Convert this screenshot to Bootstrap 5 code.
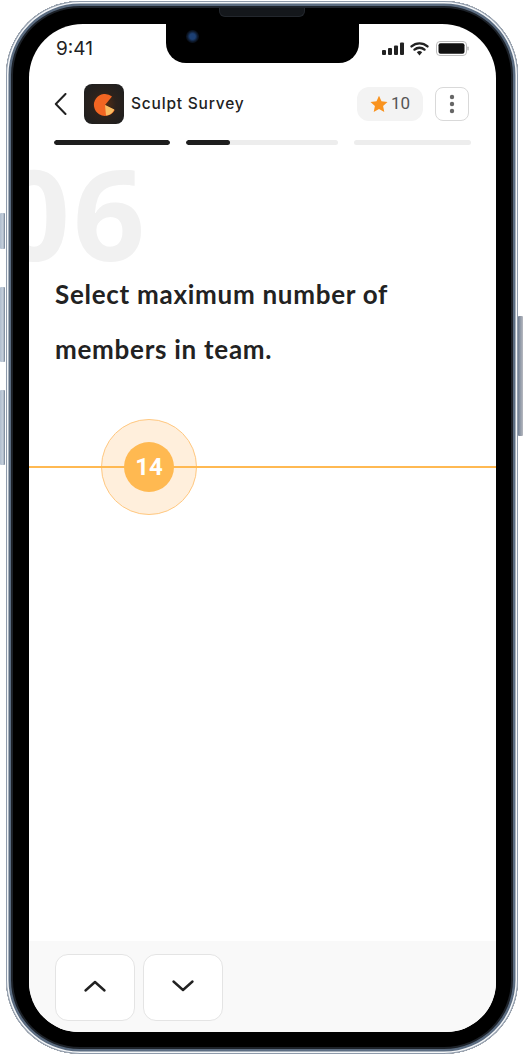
<!DOCTYPE html>
<html lang="en">
<head>
  <meta charset="UTF-8" />
  <meta name="viewport" content="width=device-width, initial-scale=1.0"/>
  <title>Sculpt Survey</title>
  <link href="https://cdn.jsdelivr.net/npm/bootstrap@5.3.3/dist/css/bootstrap.min.css" rel="stylesheet">
  <style>
    html, body { background: #fff; }
    body { margin: 0; width: 524px; height: 1056px; overflow: hidden; font-family: "Lato", sans-serif; }

    /* phone frame */
    .phone-wrap { position: relative; width: 524px; height: 1056px; padding: 1px 6px 2px 6px; }
    .phone-shell {
      position: relative; width: 100%; height: 100%; padding: 23px 22px 22px 23px;
      background: #000; border-radius: 74px;
      box-shadow: inset 0 0 0 1px #8f9bab, inset 0 0 0 2.5px #f4f6f8, inset 0 0 0 5px #5b6c81, inset 0 0 0 7px #1d2229;
    }
    .side-btn { position: absolute; background: linear-gradient(90deg, #aebccd, #c6d0dc 60%, #6d7c90); border-radius: 1px; }
    .side-a { left: 0; top: 213px; width: 5px; height: 36px; }
    .side-b { left: 0; top: 287px; width: 5px; height: 75px; }
    .side-c { left: 0; top: 390px; width: 5px; height: 75px; }
    .side-d { right: 1px; top: 316px; width: 5px; height: 120px; background: linear-gradient(90deg, #6d7c90, #b7b9c0); }
    .speaker { position: absolute; left: 213px; top: 7px; width: 86px; height: 9px; background: #14171b; border-radius: 0 0 6px 6px; border: 1px solid #23272d; border-top: 0; }

    .phone-screen { position: relative; height: 100%; background: #fff; border-radius: 54px 54px 50px 50px; overflow: hidden; }
    .notch { position: absolute; left: 137px; top: 0; width: 193px; height: 39px; background: #000; border-radius: 0 0 20px 20px; z-index: 3; }
    .camera { position: absolute; left: 20px; top: 6px; width: 13px; height: 13px; border-radius: 50%; background: radial-gradient(circle, #1c3f73 0 30%, #0b1422 60%, #05070b 100%); }

    .status-row { height: 48px; padding: 13px 27px 0 27px; }
    .status-time { font-family: "Inter", sans-serif; font-size: 19px; font-weight: 400; line-height: 24px; color: #222; }
    .status-icons { margin-top: 3px; }

    /* header */
    .top-row { height: 40px; margin-top: 12px; padding: 0 27px 0 25px; }
    .back-btn { width: 30px; }
    .app-logo { width: 40px; height: 40px; }
    .app-name { font-family: "Inter", sans-serif; font-size: 15.5px; font-weight: 500; color: #222; margin-left: 7px; letter-spacing: .8px; }
    .points-pill { width: 66px; height: 34px; border-radius: 12px; background: #f3f3f3; color: #555; font-family: "Roboto", sans-serif; font-size: 17px; gap: 3px; }
    .menu-btn { width: 34px; height: 34px; margin-left: 12px; border: 1px solid #d9d9d9; border-radius: 8px; background: #fff; }

    .progress-row { gap: 16px; margin-top: 16px; padding: 0 25px; }
    .step-track { height: 5px; border-radius: 3px; background: #ededed; overflow: hidden; }
    .step-fill { height: 100%; background: #1e1e1e; border-radius: 3px; }

    /* question */
    .question-no { height: 110px; margin: 12px 0 0 -31px; font-family: "Open Sans", sans-serif; font-weight: 700; font-size: 126px; line-height: 110px; color: #f1f1f1; letter-spacing: 3px; }
    .question-text { margin: 0 0 0 26px; font-family: "Lato", sans-serif; font-weight: 700; font-size: 26px; line-height: 55px; color: #222; letter-spacing: .72px; }

    /* slider */
    .slider-area { position: relative; height: 96px; margin-top: 42px; }
    .slider-line { position: absolute; left: 0; right: 0; top: 47px; height: 2px; background: #ffb952; }
    .slider-halo { position: absolute; left: 72px; top: 0; width: 96px; height: 96px; border-radius: 50%; background: #ffefdc; border: 1.5px solid #ffc880; }
    .slider-thumb { position: relative; z-index: 2; width: 50px; height: 50px; border-radius: 50%; background: #ffb951; color: #fff; font-family: "Roboto", sans-serif; font-weight: 700; font-size: 24px; }

    /* bottom nav */
    .bottom-bar { height: 91px; padding: 13px 0 0 26px; gap: 8px; background: #f9f9f9; }
    .nav-arrow { width: 80px; height: 67px; background: #fff; border: 1px solid #e4e4e4; border-radius: 13px; }
  </style>
</head>
<body>

<div class="phone-wrap">
  <div class="side-btn side-a"></div>
  <div class="side-btn side-b"></div>
  <div class="side-btn side-c"></div>
  <div class="side-btn side-d"></div>

  <div class="phone-shell">
    <div class="speaker"></div>
    <div class="phone-screen d-flex flex-column">
      <div class="notch"><span class="camera"></span></div>

      <!-- status bar -->
      <div class="status-row d-flex justify-content-between align-items-start flex-shrink-0">
        <span class="status-time">9:41</span>
        <svg width="87" height="18" viewBox="0 0 87 18" class="status-icons">
          <rect x="0" y="10" width="4" height="5" rx="1" fill="#222"/>
          <rect x="6" y="8" width="4" height="7" rx="1" fill="#222"/>
          <rect x="12" y="5.5" width="4" height="9.5" rx="1" fill="#222"/>
          <rect x="18" y="2.5" width="4" height="12.5" rx="1" fill="#222"/>
          <path d="M29.5 6.4a12 12 0 0 1 16 0M32.5 9.6a7.5 7.5 0 0 1 10 0" fill="none" stroke="#222" stroke-width="2.4" stroke-linecap="round"/>
          <path d="M34.8 12.3a4 4 0 0 1 5.4 0L37.5 15.4z" fill="#222"/>
          <rect x="54.5" y="1.5" width="30" height="14" rx="3.5" fill="none" stroke="#bdbdbd" stroke-width="1"/>
          <rect x="56.5" y="3.2" width="26" height="10.6" rx="2" fill="#111"/>
          <rect x="85.2" y="6.5" width="1.6" height="4" rx=".7" fill="#bdbdbd"/>
        </svg>
      </div>

      <!-- header -->
      <div class="top-row d-flex align-items-center flex-shrink-0">
        <div class="back-btn d-flex">
          <svg width="13" height="22" viewBox="0 0 13 22"><path d="M11.5 1 1.8 11l9.7 10" fill="none" stroke="#222" stroke-width="2" stroke-linecap="round" stroke-linejoin="round"/></svg>
        </div>
        <svg class="app-logo flex-shrink-0" viewBox="0 0 40 40">
          <defs>
            <radialGradient id="logoGlow" cx="50%" cy="50%" r="60%">
              <stop offset="0" stop-color="#5a3015"/><stop offset=".5" stop-color="#2c221c"/><stop offset="1" stop-color="#201f1f"/>
            </radialGradient>
          </defs>
          <rect width="40" height="40" rx="8" fill="url(#logoGlow)"/>
          <path d="M21 21 28 12.5A11 11 0 1 0 30.7 26L21 21z" fill="#f26522"/>
          <path d="M21 21 30.3 25.4A10.4 10.4 0 0 1 22 31.4z" fill="#f9bd62"/>
        </svg>
        <span class="app-name">Sculpt Survey</span>
        <div class="points-pill d-flex align-items-center justify-content-center ms-auto">
          <svg width="18" height="18" viewBox="0 0 18 18"><path d="M9 .8l2.5 5.5 6 .7-4.4 4 1.2 5.9L9 14l-5.3 2.9 1.2-5.9-4.4-4 6-.7z" fill="#f9931f"/></svg>
          <span>10</span>
        </div>
        <div class="menu-btn d-flex flex-column align-items-center justify-content-center gap-1">
          <svg width="6" height="20" viewBox="0 0 6 20"><circle cx="3" cy="3" r="2.2" fill="#666"/><circle cx="3" cy="10" r="2.2" fill="#666"/><circle cx="3" cy="17" r="2.2" fill="#666"/></svg>
        </div>
      </div>

      <!-- step progress -->
      <div class="progress-row d-flex flex-shrink-0">
        <div class="step-track" style="width:116px"><div class="step-fill" style="width:100%"></div></div>
        <div class="step-track" style="width:152px"><div class="step-fill" style="width:29%"></div></div>
        <div class="step-track" style="width:117px"><div class="step-fill" style="width:0"></div></div>
      </div>

      <div class="question-no flex-shrink-0">06</div>
      <p class="question-text flex-shrink-0">Select maximum number of<br>members in team.</p>

      <div class="slider-area flex-shrink-0">
        <div class="slider-halo d-flex align-items-center justify-content-center">
          <div class="slider-thumb d-flex align-items-center justify-content-center">14</div>
        </div>
        <div class="slider-line"></div>
      </div>

      <!-- bottom nav -->
      <div class="bottom-bar d-flex mt-auto flex-shrink-0">
        <button type="button" class="nav-arrow d-flex align-items-center justify-content-center p-0" aria-label="Previous">
          <svg width="24" height="14" viewBox="0 0 24 14" class="mb-1"><path d="M2.5 11.5 12 3l9.5 8.5" fill="none" stroke="#222" stroke-width="2.4" stroke-linecap="round" stroke-linejoin="round"/></svg>
        </button>
        <button type="button" class="nav-arrow d-flex align-items-center justify-content-center p-0" aria-label="Next">
          <svg width="24" height="14" viewBox="0 0 24 14" class="mb-1"><path d="M2.5 2.5 12 11l9.5-8.5" fill="none" stroke="#222" stroke-width="2.4" stroke-linecap="round" stroke-linejoin="round"/></svg>
        </button>
      </div>
    </div>
  </div>
</div>

<script src="https://cdn.jsdelivr.net/npm/bootstrap@5.3.3/dist/js/bootstrap.bundle.min.js"></script>
</body>
</html>
